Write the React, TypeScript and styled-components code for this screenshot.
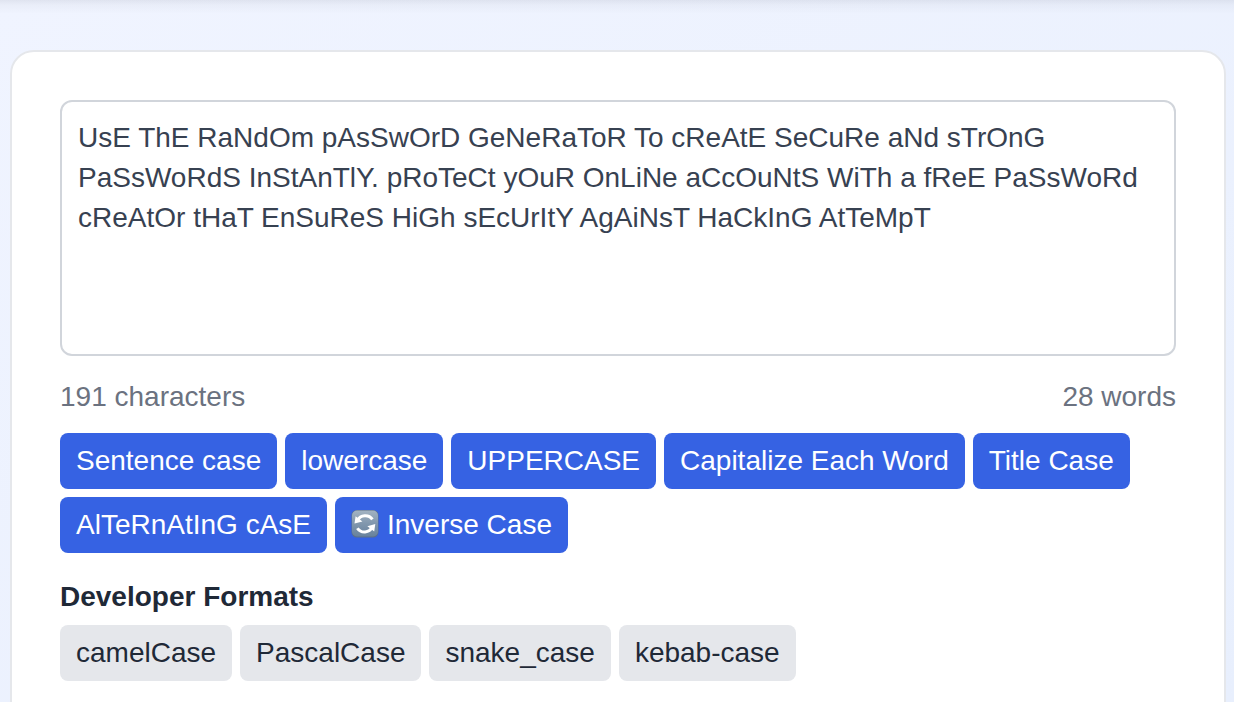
import React, { useState } from "react";
import styled, { createGlobalStyle } from "styled-components";

const GlobalStyle = createGlobalStyle`
  *, *::before, *::after { box-sizing: border-box; }
  body {
    margin: 0;
    font-family: "Liberation Sans", Arial, sans-serif;
    font-size: 28px;
    line-height: 40px;
    color: #1f2937;
  }
`;

const Page = styled.main`
  height: 100vh;
  overflow: hidden;
  padding: 50px 8px 0 10px;
  background:
    linear-gradient(to bottom, rgba(30, 35, 60, 0.08), rgba(30, 35, 60, 0.03) 5px, rgba(30, 35, 60, 0) 14px),
    linear-gradient(to bottom right, #f0f4ff, #e8effd);
`;

const Card = styled.section`
  display: flex;
  flex-direction: column;
  min-height: 110vh;
  padding: 48px;
  background: #ffffff;
  border: 2px solid #e5e7eb;
  border-radius: 24px;
`;

const TextInput = styled.textarea`
  display: block;
  width: 100%;
  height: 256px;
  padding: 16px;
  border: 2px solid #d1d5db;
  border-radius: 12px;
  background: #ffffff;
  color: #374151;
  font: inherit;
  resize: none;
  outline: none;
`;

const Stats = styled.div`
  display: flex;
  justify-content: space-between;
  margin: 21px 0 16px;
  color: #6b7280;
`;

const ButtonRow = styled.div`
  display: flex;
  flex-wrap: wrap;
  gap: 8px;
`;

const CaseButton = styled.button<{ $tone: "primary" | "muted" }>`
  display: inline-flex;
  align-items: center;
  gap: 8px;
  padding: 8px 16px;
  border: 0;
  border-radius: 8px;
  font: inherit;
  cursor: pointer;
  color: ${({ $tone }) => ($tone === "primary" ? "#ffffff" : "#1f2937")};
  background: ${({ $tone }) => ($tone === "primary" ? "#3662e3" : "#e5e7eb")};
`;

const Heading = styled.h3`
  margin: 24px 0 8px;
  font-size: 28px;
  font-weight: 700;
`;

const SwapIcon = () => (
  <svg width="28" height="30" viewBox="0 0 28 30" aria-hidden="true">
    <defs>
      <linearGradient id="swap-face" x1="0" y1="0" x2="0" y2="1">
        <stop offset="0" stopColor="#a3b3c2" />
        <stop offset="0.5" stopColor="#8197ad" />
        <stop offset="1" stopColor="#68829d" />
      </linearGradient>
    </defs>
    <rect x="0.5" y="0" width="27" height="27.5" rx="5.5" fill="#5c7089" />
    <rect x="1" y="0.5" width="26" height="26" rx="5" fill="url(#swap-face)" />
    <g fill="none" stroke="#ffffff" strokeWidth="3">
      <path d="M6.6 10.4A8.4 8 0 0 1 21.4 9.4" />
      <path d="M21.2 17.2A8.4 8 0 0 1 6.4 18.2" />
    </g>
    <path d="M4.6 6.2L3.5 13.6L11.4 11.4Z" fill="#ffffff" />
    <path d="M23.2 21.4L24.3 14L16.4 16.2Z" fill="#ffffff" />
  </svg>
);

const sentenceCase = (s: string) =>
  s.toLowerCase().replace(/(^\s*|[.!?]\s+)([a-z])/g, (_, a, b) => a + b.toUpperCase());
const capitalize = (s: string) => s.toLowerCase().replace(/\b[a-z]/g, (c) => c.toUpperCase());
const alternate = (s: string) =>
  [...s].map((c, i) => (i % 2 ? c.toLowerCase() : c.toUpperCase())).join("");
const invert = (s: string) =>
  [...s].map((c) => (c === c.toUpperCase() ? c.toLowerCase() : c.toUpperCase())).join("");
const words = (s: string) => s.toLowerCase().match(/[a-z0-9]+/g) ?? [];
const pascal = (s: string) => words(s).map((w) => w[0].toUpperCase() + w.slice(1)).join("");

type Format = { label: string; icon?: boolean; apply: (s: string) => string };

const textFormats: Format[] = [
  { label: "Sentence case", apply: sentenceCase },
  { label: "lowercase", apply: (s) => s.toLowerCase() },
  { label: "UPPERCASE", apply: (s) => s.toUpperCase() },
  { label: "Capitalize Each Word", apply: capitalize },
  { label: "Title Case", apply: capitalize },
  { label: "AlTeRnAtInG cAsE", apply: alternate },
  { label: "Inverse Case", icon: true, apply: invert },
];

const developerFormats: Format[] = [
  { label: "camelCase", apply: (s) => pascal(s).replace(/^./, (c) => c.toLowerCase()) },
  { label: "PascalCase", apply: pascal },
  { label: "snake_case", apply: (s) => words(s).join("_") },
  { label: "kebab-case", apply: (s) => words(s).join("-") },
];

const initialText =
  "UsE ThE RaNdOm pAsSwOrD GeNeRaToR To cReAtE SeCuRe aNd sTrOnG PaSsWoRdS InStAnTlY. pRoTeCt yOuR OnLiNe aCcOuNtS WiTh a fReE PaSsWoRd cReAtOr tHaT EnSuReS HiGh sEcUrItY AgAiNsT HaCkInG AtTeMpT";

export default function App() {
  const [text, setText] = useState(initialText);
  const wordCount = text.trim() ? text.trim().split(/\s+/).length : 0;

  const renderButtons = (formats: Format[], tone: "primary" | "muted") => (
    <ButtonRow>
      {formats.map((f) => (
        <CaseButton key={f.label} type="button" $tone={tone} onClick={() => setText(f.apply(text))}>
          {f.icon && <SwapIcon />}
          {f.label}
        </CaseButton>
      ))}
    </ButtonRow>
  );

  return (
    <>
      <GlobalStyle />
      <Page>
        <Card>
          <TextInput
            aria-label="Text to convert"
            spellCheck={false}
            value={text}
            onChange={(e) => setText(e.target.value)}
          />
          <Stats>
            <span>{text.length} characters</span>
            <span>{wordCount} words</span>
          </Stats>
          {renderButtons(textFormats, "primary")}
          <Heading>Developer Formats</Heading>
          {renderButtons(developerFormats, "muted")}
        </Card>
      </Page>
    </>
  );
}
